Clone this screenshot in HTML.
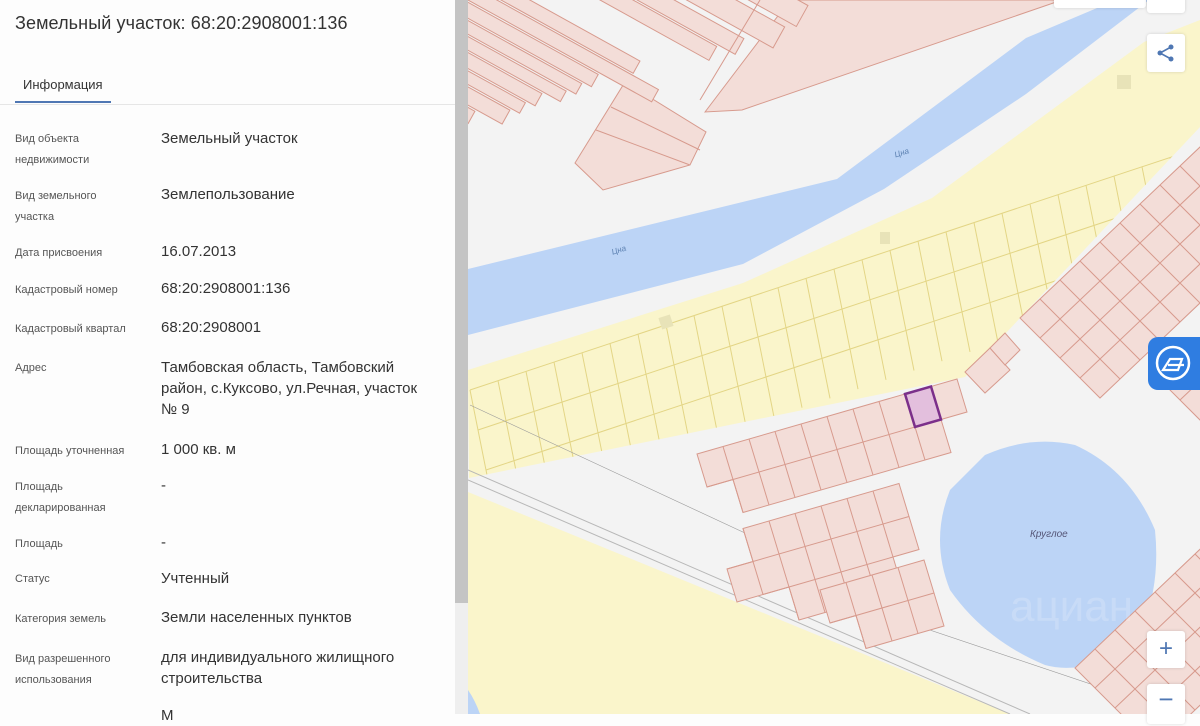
<!DOCTYPE html>
<html><head><meta charset="utf-8"><style>
*{margin:0;padding:0;box-sizing:border-box}
body{width:1200px;height:714px;overflow:hidden;background:#fdfdfd;font-family:"Liberation Sans","Noto Sans CJK SC",sans-serif;position:relative}
#panel{position:absolute;left:0;top:0;width:455px;height:714px;background:#fdfdfd}
h1{position:absolute;left:15px;top:13px;font-size:18px;font-weight:normal;color:#333;letter-spacing:0.1px}
.tab{position:absolute;left:23px;top:77px;font-size:13px;color:#333}
.tabline{position:absolute;left:15px;top:101px;width:96px;height:2px;background:#4f77b3}
.div{position:absolute;left:0;top:104px;width:455px;height:1px;background:#e6e6e6}
.l{position:absolute;left:15px;font-size:11px;color:#555;line-height:21px}
.v{position:absolute;left:161px;font-size:15px;color:#333;line-height:21px}
#sb{position:absolute;left:455px;top:0;width:13px;height:603px;background:#c4c4c4}
#sb2{position:absolute;left:455px;top:603px;width:13px;height:111px;background:#efefef}
svg{position:absolute;left:468px;top:0}
.btn{position:absolute;background:#fff;border-radius:3px;box-shadow:0 0 3px rgba(0,0,0,.15)}
</style></head><body>
<div id="panel">
<h1>Земельный участок: 68:20:2908001:136</h1>
<div class="tab">Информация</div><div class="tabline"></div><div class="div"></div>
<div class="l" style="top:129px">Вид объекта<br>недвижимости</div><div class="v" style="top:128px">Земельный участок</div>
<div class="l" style="top:186px">Вид земельного<br>участка</div><div class="v" style="top:184px">Землепользование</div>
<div class="l" style="top:243px">Дата присвоения</div><div class="v" style="top:241px">16.07.2013</div>
<div class="l" style="top:280px">Кадастровый номер</div><div class="v" style="top:278px">68:20:2908001:136</div>
<div class="l" style="top:319px">Кадастровый квартал</div><div class="v" style="top:317px">68:20:2908001</div>
<div class="l" style="top:358px">Адрес</div><div class="v" style="top:357px">Тамбовская область, Тамбовский<br>район, с.Куксово, ул.Речная, участок<br>№ 9</div>
<div class="l" style="top:441px">Площадь уточненная</div><div class="v" style="top:439px">1 000 кв. м</div>
<div class="l" style="top:477px">Площадь<br>декларированная</div><div class="v" style="top:475px">-</div>
<div class="l" style="top:534px">Площадь</div><div class="v" style="top:532px">-</div>
<div class="l" style="top:569px">Статус</div><div class="v" style="top:568px">Учтенный</div>
<div class="l" style="top:609px">Категория земель</div><div class="v" style="top:607px">Земли населенных пунктов</div>
<div class="l" style="top:649px">Вид разрешенного<br>использования</div><div class="v" style="top:647px">для индивидуального жилищного<br>строительства</div>
<div class="v" style="top:705px">М</div>
</div>
<div id="sb"></div><div id="sb2"></div>
<svg width="732" height="714" viewBox="468 0 732 714">
<defs>
<clipPath id="cy"><polygon points="468,370 743,283 932,198 1144,42 1200,20 1200,127 1020,318 965,377 469,478"/></clipPath>
<clipPath id="cr"><polygon points="1000,0 1200,0 1200,714 1000,714"/></clipPath>
</defs>
<rect x="468" y="0" width="732" height="714" fill="#f3f3f3"/>
<polygon points="468,370 743,283 932,198 1144,42 1200,20 1200,127 1020,318 965,377 469,478" fill="#faf5cb"/>
<g clip-path="url(#cy)" fill="none" stroke="#e3d585" stroke-width="1">
<g transform="matrix(28,-9.3,8,40,470,390)">
<path vector-effect="non-scaling-stroke" d="M0,0H30M0,1H30M0,2H30"/>
<path vector-effect="non-scaling-stroke" d="M0,0V3M1,0V3M2,0V3M3,0V3M4,0V3M5,0V3M6,0V3M7,0V3M8,0V3M9,0V3M10,0V3M11,0V3M12,0V3M13,0V3M14,0V3M15,0V3M16,0V3M17,0V3M18,0V3M19,0V3M20,0V3M21,0V3M22,0V3M23,0V3M24,0V3M25,0V3M26,0V3M27,0V3"/>
</g>
</g>
<rect x="660" y="316" width="12" height="12" fill="#e8e3b8" transform="rotate(-18 666 322)"/>
<rect x="880" y="232" width="10" height="12" fill="#e8e3b8"/>
<rect x="1117" y="75" width="14" height="14" fill="#e8e3b8"/>
<polygon points="468,492 1010,714 468,714" fill="#faf5cb"/>
<path d="M468,480 L1010,714 M468,470 L1030,714" stroke="#b8b8b8" stroke-width="1" fill="none"/>
<path d="M470,405 L760,540 L900,620 M900,620 L1180,714" stroke="#999" stroke-width=".6" fill="none"/>
<path d="M468,690 Q475,700 480,714 L468,714Z" fill="#bcd4f6"/>
<polygon points="468,269 837,179 1026,38 1116,0 1149,0 1026,94 884,189 743,264 468,335" fill="#bcd4f6"/>
<text x="612" y="253" font-size="8" fill="#5a7fb0" font-style="italic" transform="rotate(-18 618 252)">Цна</text>
<text x="895" y="156" font-size="8" fill="#5a7fb0" font-style="italic" transform="rotate(-18 900 155)">Цна</text>
<g fill="#f3ddd8" stroke="#d79a8d" stroke-width="1">
<polygon points="705,112 790,0 1062,0 742,110"/>
<polygon points="575,163 625,82 706,132 690,165 603,190"/>
<path d="M596,130 L690,165 M611,107 L700,150" fill="none"/>
<g transform="translate(468,0) rotate(29)">
<rect x="-20" y="-30" width="200" height="14"/>
<rect x="-20" y="-14" width="230" height="14"/>
<rect x="-20" y="2" width="170" height="14"/>
<rect x="-20" y="18" width="160" height="12"/>
<rect x="-20" y="32" width="150" height="12"/>
<rect x="-20" y="46" width="130" height="14"/>
<rect x="-20" y="62" width="120" height="12"/>
<rect x="-20" y="76" width="110" height="16"/>
<rect x="-20" y="94" width="80" height="14"/>
<rect x="-20" y="112" width="60" height="18"/>
<rect x="80" y="-80" width="160" height="16"/>
<rect x="110" y="-100" width="150" height="18"/>
<rect x="140" y="-130" width="150" height="24"/>
<rect x="200" y="-160" width="100" height="24"/>
</g>
<path d="M700,100 L760,0" fill="none"/>
</g>
<g fill="#f3ddd8" stroke="#d79a8d">
<g transform="matrix(26,-7.5,10,33,905,394)">
<path vector-effect="non-scaling-stroke" d="M-8,0H2V1H1V2H-7V1H-8Z"/>
<path vector-effect="non-scaling-stroke" fill="none" d="M-8,1H1M-7,0V2M-6,0V2M-5,0V2M-4,0V2M-3,0V2M-2,0V2M-1,0V2M0,0V2M1,0V1"/>
</g>
<g transform="matrix(26,-7.5,10,33,717,536)">
<path vector-effect="non-scaling-stroke" d="M1,0H7V2H6V3H2V2H0V1H1Z"/>
<path vector-effect="non-scaling-stroke" fill="none" d="M0,1H7M1,2H6M1,0V2M2,0V3M3,0V3M4,0V3M5,0V3M6,0V2"/>
</g>
<g transform="matrix(26,-7.5,10,33,820,590)">
<path vector-effect="non-scaling-stroke" d="M0,0H4V2H1V1H0Z"/>
<path vector-effect="non-scaling-stroke" fill="none" d="M0,1H4M1,0V2M2,0V2M3,0V2"/>
</g>
<polygon points="905,394 931,386.5 941,419.5 915,427" fill="#e3bfdd" stroke="#7b2f8a" stroke-width="2.5"/>
</g>
<path d="M985,455 Q1030,435 1075,445 Q1130,470 1155,530 Q1162,600 1130,650 Q1080,675 1045,665 Q985,640 950,590 Q930,540 950,490 Z" fill="#bcd4f6"/>
<text x="1030" y="537" font-size="10" fill="#557" font-style="italic">Круглое</text>
<g clip-path="url(#cr)" fill="#f3ddd8" stroke="#d79a8d">
<g transform="matrix(20,-19,20,20,1020,318)">
<rect vector-effect="non-scaling-stroke" x="0" y="0" width="10" height="4"/>
<path vector-effect="non-scaling-stroke" fill="none" d="M0,1H10M0,2H10M0,3H10M1,0V4M2,0V4M3,0V4M4,0V4M5,0V4M6,0V4M7,0V4M8,0V4M9,0V4"/>
<rect vector-effect="non-scaling-stroke" x="2" y="5" width="8" height="3"/>
<path vector-effect="non-scaling-stroke" fill="none" d="M2,6H10M2,7H10M3,5V8M4,5V8M5,5V8M6,5V8M7,5V8M8,5V8M9,5V8"/>
</g>
<g transform="matrix(20,-19,20,20,1075,668)">
<rect vector-effect="non-scaling-stroke" x="0" y="0" width="7" height="4"/>
<path vector-effect="non-scaling-stroke" fill="none" d="M0,1H7M0,2H7M0,3H7M1,0V4M2,0V4M3,0V4M4,0V4M5,0V4M6,0V4"/>
</g>
</g>
<g fill="#f3ddd8" stroke="#d79a8d">
<polygon points="965,372 990,348 1010,370 985,393"/>
<polygon points="990,348 1005,333 1020,350 1005,365"/>
</g>
</svg>
<div class="btn" style="left:1054px;top:-4px;width:92px;height:12px"></div>
<div class="btn" style="left:1147px;top:-10px;width:38px;height:23px"><svg width="38" height="23" style="left:0;top:0"><path d="M13,2 L19,6 L25,2" stroke="#4f77b3" fill="none" stroke-width="1.6"/></svg></div>
<div class="btn" style="left:1147px;top:34px;width:38px;height:38px"><svg width="38" height="38" style="left:0;top:0"><circle cx="24" cy="13" r="2.5" fill="#4f77b3"/><circle cx="13" cy="19" r="2.5" fill="#4f77b3"/><circle cx="24" cy="25" r="2.5" fill="#4f77b3"/><path d="M24,13 L13,19 L24,25" stroke="#4f77b3" stroke-width="1.6" fill="none"/></svg></div>
<div style="position:absolute;left:1148px;top:337px;width:60px;height:53px;background:#2f7de1;border-radius:10px 0 0 10px"><svg width="52" height="53" style="left:0;top:0"><circle cx="25" cy="26" r="16" fill="none" stroke="#fff" stroke-width="2.5"/><path d="M15,33 L22,22 L34,22 L30,33 Z M20,28 L36,28" stroke="#fff" stroke-width="2.2" fill="none"/></svg></div>
<div style="position:absolute;left:1010px;top:582px;font-size:44px;color:rgba(255,255,255,.18)">ациан</div>
<div class="btn" style="left:1147px;top:631px;width:38px;height:37px;font-size:24px;color:#4f77b3;text-align:center;line-height:36px">+</div>
<div class="btn" style="left:1147px;top:684px;width:38px;height:40px;font-size:26px;color:#4f77b3;text-align:center;line-height:30px">−</div>
</body></html>
